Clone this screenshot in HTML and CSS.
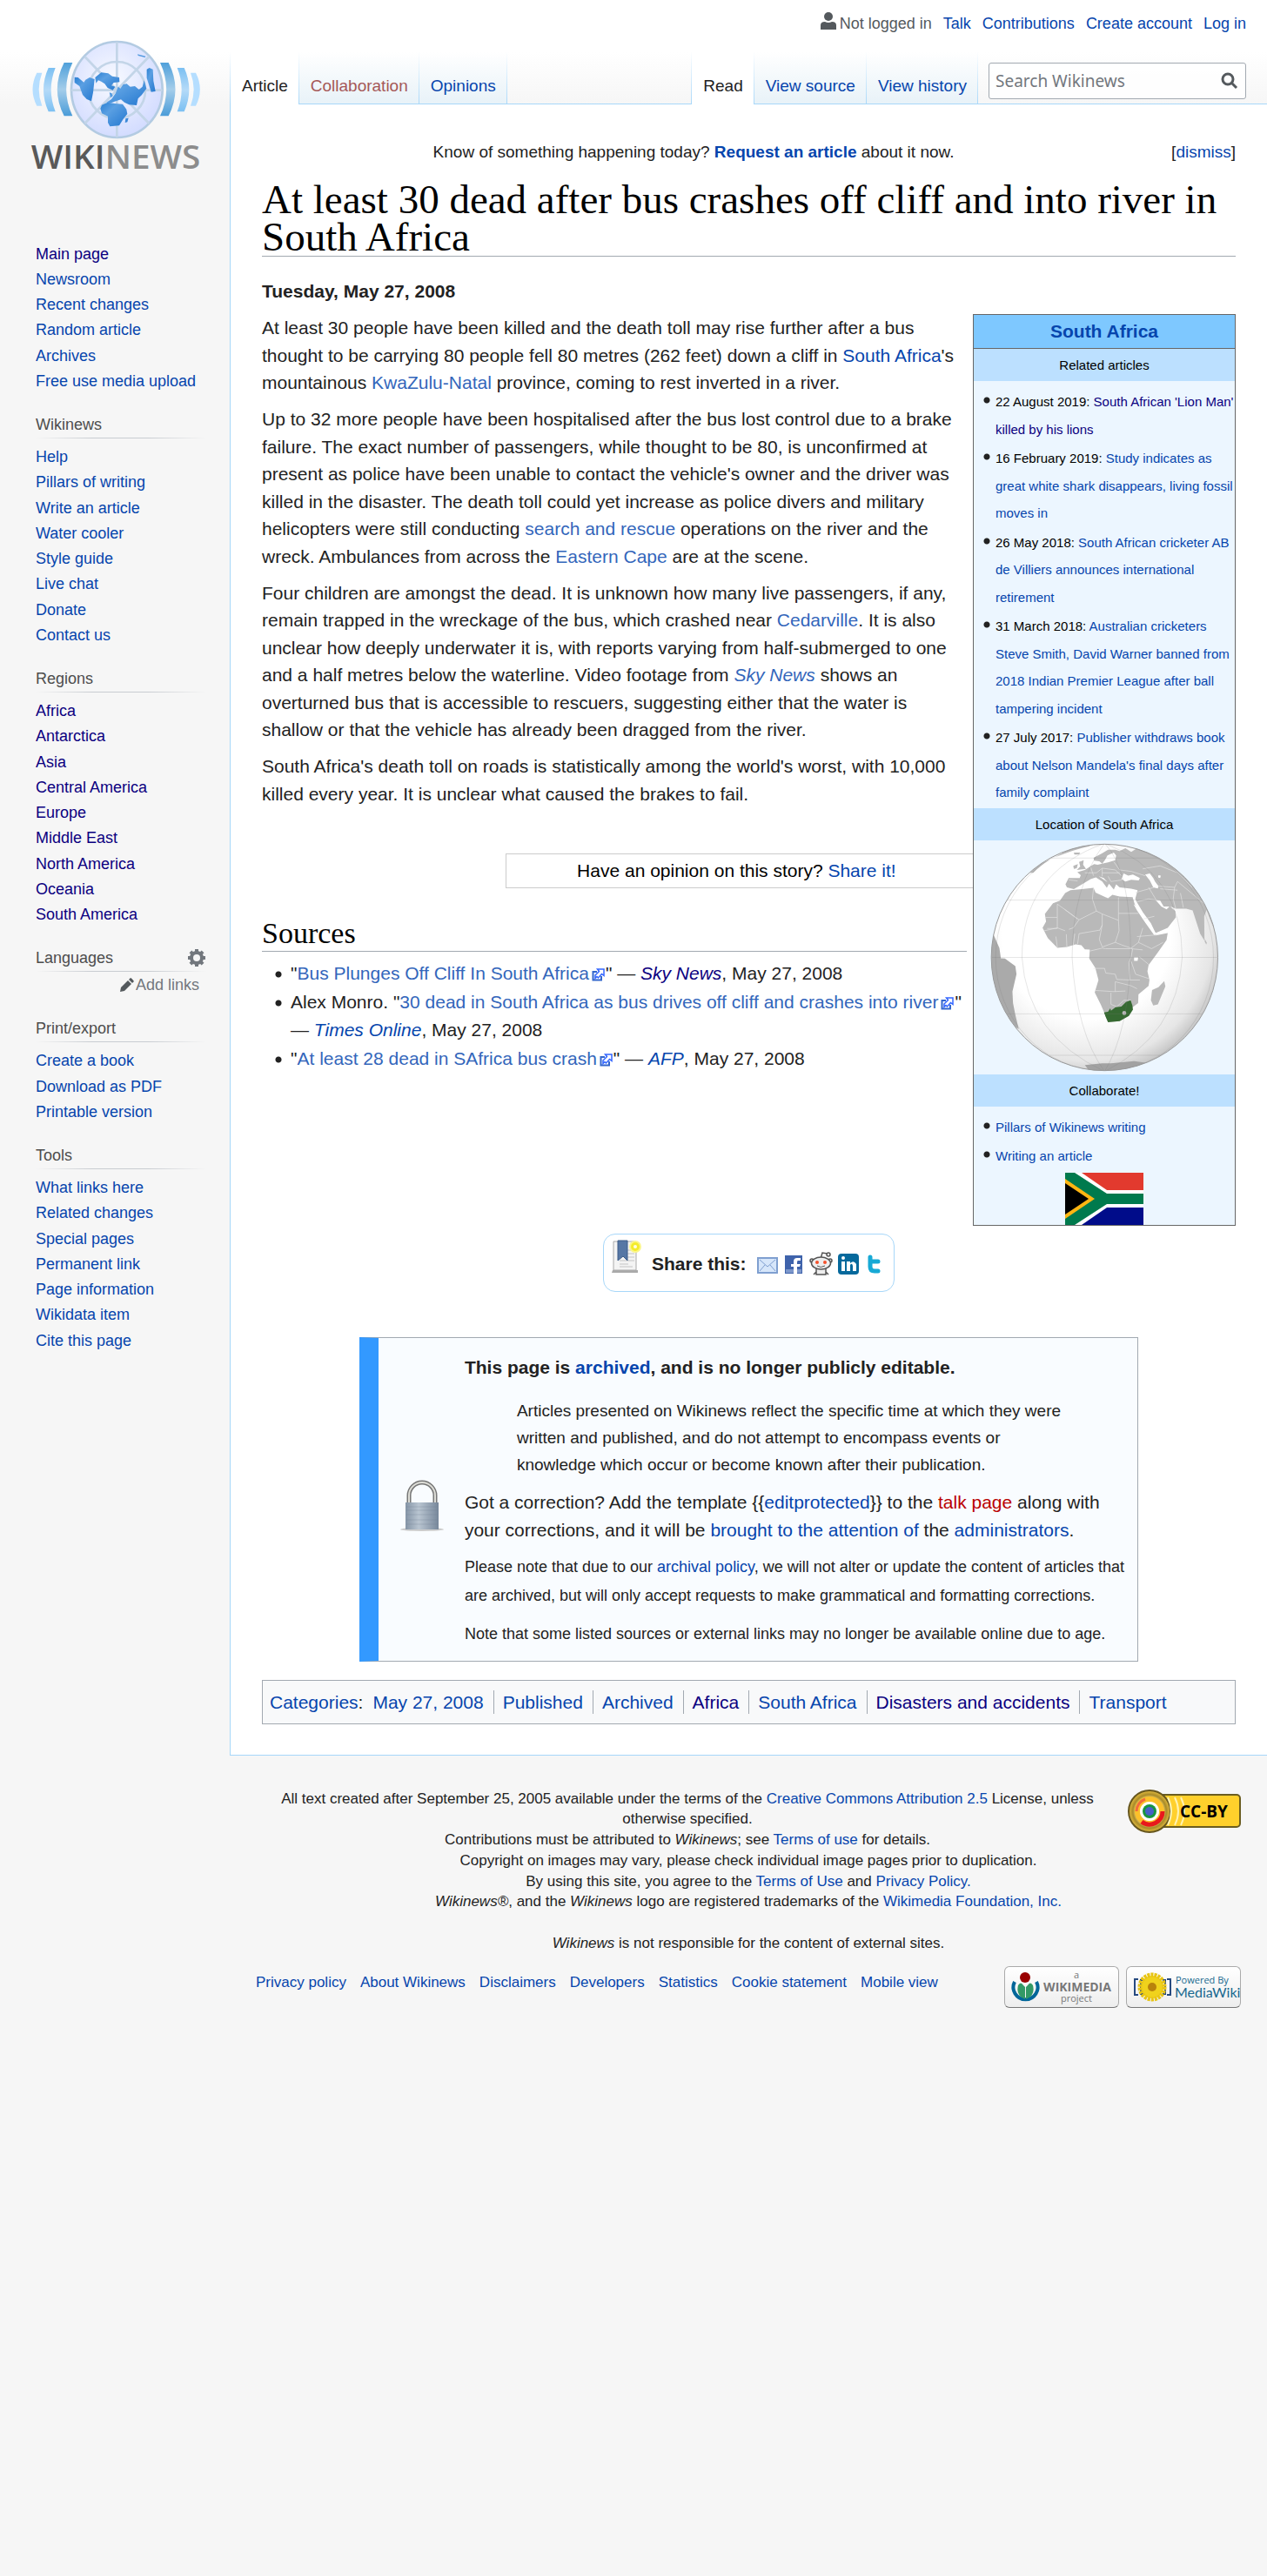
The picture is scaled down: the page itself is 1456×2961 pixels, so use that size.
FILE: index.html
```html
<!DOCTYPE html>
<html lang="en">
<head>
<meta charset="utf-8">
<meta name="viewport" content="width=device-width, initial-scale=1">
<title>At least 30 dead after bus crashes off cliff and into river in South Africa - Wikinews</title>
<link rel="stylesheet" href="styles.css">
</head>
<body>
<svg width="0" height="0" class="defs" aria-hidden="true">
  <symbol id="ext" viewBox="0 0 15 15">
    <path d="M6 4H1.500v9.500H11V9" fill="none" stroke="#36c" stroke-width="2"/>
    <path d="M6.500 1H14v7.500l-2.500-2-4 4.500-1.500-1.500L4 11.500V8l4.500-4.500z" fill="#fff" stroke="#36f" stroke-width="1.500"/>
  </symbol>
</svg>
<div class="page">
  <aside class="sidebar">
    <a class="logo" href="#" aria-label="Wikinews main page">
      <svg viewBox="100 130 600 510" width="200" height="170">
        <defs>
          <radialGradient id="lg" cx=".45" cy=".4" r=".6"><stop offset="0" stop-color="#f8faff"/><stop offset="1" stop-color="#d3dcff"/></radialGradient>
          <linearGradient id="w1" x2="0" y2="1"><stop offset="0" stop-color="#4fa0da"/><stop offset=".5" stop-color="#a4cdea"/><stop offset="1" stop-color="#4a9cd8"/></linearGradient>
          <linearGradient id="w2" x2="0" y2="1"><stop offset="0" stop-color="#7cc0f2"/><stop offset=".5" stop-color="#b4daf8"/><stop offset="1" stop-color="#7cc0f2"/></linearGradient>
          <linearGradient id="ld" x2="1" y2="1"><stop offset="0" stop-color="#2a80d4"/><stop offset=".35" stop-color="#5a9fe2"/><stop offset="1" stop-color="#2478d0"/></linearGradient>
          <g id="waves"><path fill="url(#w1)" d="M251 217H222Q175 309 222 401H251Q208 309 251 217Z"/><path fill="url(#w2)" d="M192 235H168Q134 309 168 386H192Q162 309 192 235Z"/><path fill="#b5deff" d="M146 252H128Q99 309 128 366H146Q124 309 146 252Z"/></g>
        </defs>
        <use href="#waves"/><use href="#waves" transform="translate(804) scale(-1 1)"/>
        <ellipse cx="404" cy="310" rx="157" ry="165" fill="url(#lg)" stroke="#b3cbe2" stroke-width="8"/>
        <circle cx="404" cy="312" r="98" fill="none" stroke="#c3d5e8" stroke-width="8"/>
        <path d="M404 146V474M247 312H561M293 196L515 427M515 196L293 427" stroke="#c3d5e8" stroke-width="8"/>
        <g fill="url(#ld)">
          <path d="M258 267L270 268 290 285 296 276 310 268 327 274 322 320 316 350 300 343 286 328 275 298 258 286Z"/>
          <path d="M329 268L350 251 374 254 388 264 412 268 413 284 393 286 385 296 398 300 390 312 372 304 362 290 350 282 340 278 332 288Z"/>
          <path d="M385 343L400 322 408 300 416 306 426 292 438 290 450 300 466 298 480 310 492 300 498 278 506 306 490 328 477 341 472 364 446 362 430 354 418 344 400 350 384 356 368 354Z"/>
          <path d="M352 363L372 354 398 358 424 360 437 378 440 394 427 410 412 434 380 437 373 424 373 402 352 392 347 376Z"/>
          <path d="M507 240L516 235 528 240 530 280 537 316 522 318 514 292 507 270Z"/>
          <path d="M434 410L444 408 440 422 432 424ZM475 188l28 7-2 4-24-6ZM382 338l-4-18 8 2 4 10Z"/>
        </g>
        <text x="108" y="583" class="word" fill="#595959">WIKI</text><text x="692" y="583" class="word" fill="#8c8c8c" text-anchor="end">NEWS</text>
      </svg>
    </a>
    <nav class="portal"><ul><li><a class="v" href="#">Main page</a></li><li><a href="#">Newsroom</a></li><li><a href="#">Recent changes</a></li><li><a href="#">Random article</a></li><li><a href="#">Archives</a></li><li><a href="#">Free use media upload</a></li></ul></nav>
    <nav class="portal"><h3>Wikinews</h3><ul><li><a href="#">Help</a></li><li><a href="#">Pillars of writing</a></li><li><a href="#">Write an article</a></li><li><a href="#">Water cooler</a></li><li><a href="#">Style guide</a></li><li><a href="#">Live chat</a></li><li><a href="#">Donate</a></li><li><a href="#">Contact us</a></li></ul></nav>
    <nav class="portal"><h3>Regions</h3><ul><li><a class="v" href="#">Africa</a></li><li><a class="v" href="#">Antarctica</a></li><li><a class="v" href="#">Asia</a></li><li><a class="v" href="#">Central America</a></li><li><a class="v" href="#">Europe</a></li><li><a class="v" href="#">Middle East</a></li><li><a class="v" href="#">North America</a></li><li><a class="v" href="#">Oceania</a></li><li><a class="v" href="#">South America</a></li></ul></nav>
    <nav class="portal"><h3>Languages
      <button class="gear" type="button" aria-label="Language settings"><svg viewBox="0 0 22 22" width="22" height="22"><g fill="#72777d"><path d="M9 1h4v20H9zM1 9h20v4H1z"/><path d="M9 1h4v20H9zM1 9h20v4H1z" transform="rotate(45 11 11)"/><circle cx="11" cy="11" r="8"/></g><circle cx="11" cy="11" r="4" fill="#f6f6f6"/></svg></button></h3>
      <a class="add" href="#"><svg viewBox="0 0 16 16" width="16" height="16"><path fill="#54595d" d="M0 16l1-5 8-8 4 4-8 8zM10 2l2-2q1 0 4 4l-2 2z"/></svg>Add links</a></nav>
    <nav class="portal"><h3>Print/export</h3><ul><li><a href="#">Create a book</a></li><li><a href="#">Download as PDF</a></li><li><a href="#">Printable version</a></li></ul></nav>
    <nav class="portal"><h3>Tools</h3><ul><li><a href="#">What links here</a></li><li><a href="#">Related changes</a></li><li><a href="#">Special pages</a></li><li><a href="#">Permanent link</a></li><li><a href="#">Page information</a></li><li><a href="#">Wikidata item</a></li><li><a href="#">Cite this page</a></li></ul></nav>
  </aside>

  <div class="column">
    <header class="head">
      <nav class="personal"><span class="anon"><svg viewBox="0 0 18 20" width="18" height="20"><ellipse cx="9" cy="5" rx="5" ry="5" fill="#54595d"/><path fill="#54595d" d="M0 20v-5q0-4 5-4 4 2 8 0 5 0 5 4v5z"/></svg>Not logged in</span><a href="#">Talk</a><a href="#">Contributions</a><a href="#">Create account</a><a href="#">Log in</a></nav>
      <div class="bar">
        <nav class="tabs"><a class="on" href="#">Article</a><a class="gone" href="#">Collaboration</a><a href="#">Opinions</a></nav>
        <nav class="tabs views"><a class="on" href="#">Read</a><a href="#">View source</a><a href="#">View history</a></nav>
        <form class="search"><input type="search" placeholder="Search Wikinews" aria-label="Search Wikinews"><button type="button" aria-label="Search"><svg viewBox="0 0 20 20" width="20" height="20" fill="none" stroke="#54595d" stroke-width="3"><circle cx="8" cy="8" r="6"/><path d="M12 12l6 6"/></svg></button></form>
      </div>
    </header>

    <main class="content">
      <div class="notice"><span class="msg">Know of something happening today? <a href="#"><b>Request an article</b></a> about it now.</span><span>[<a href="#">dismiss</a>]</span></div>
      <h1>At least 30 dead after bus crashes off cliff and into river in South Africa</h1>
      <p><b>Tuesday, May 27, 2008</b></p>
      <aside class="infobox">
        <h2><a href="#">South Africa</a></h2>
        <h3>Related articles</h3>
        <ul><li>22 August 2019: <a class="v" href="#">South African 'Lion Man' killed by his lions</a></li><li>16 February 2019: <a href="#">Study indicates as great white shark disappears, living fossil moves in</a></li><li>26 May 2018: <a href="#">South African cricketer AB de Villiers announces international retirement</a></li><li>31 March 2018: <a href="#">Australian cricketers Steve Smith, David Warner banned from 2018 Indian Premier League after ball tampering incident</a></li><li>27 July 2017: <a href="#">Publisher withdraws book about Nelson Mandela's final days after family complaint</a></li></ul>
        <h3>Location of South Africa</h3>
        <svg class="map" viewBox="115 147 787 790" width="263" height="263" role="img" aria-label="Globe centred on Africa with South Africa in green">
          <defs><radialGradient id="sea" cx=".42" cy=".4" r=".62"><stop offset=".6" stop-color="#fff"/><stop offset=".9" stop-color="#e6e6e6"/><stop offset="1" stop-color="#c8c8c8"/></radialGradient><clipPath id="gc"><circle cx="508" cy="542" r="391"/></clipPath></defs>
          <circle cx="508" cy="542" r="391" fill="url(#sea)"/>
          <g clip-path="url(#gc)">
            <g fill="#b9b9b9">
              <path d="M390 310L430 306 470 302 477 318 520 338 535 326 560 332 605 334 612 358 640 408 664 440 684 466 726 458 722 482 692 525 660 568 656 590 663 620 660 640 625 670 624 700 605 714 588 745 560 762 520 765 508 735 495 705 474 663 487 620 476 578 455 546 457 515 440 514 428 500 408 497 378 506 345 509 312 475 294 440 306 418 302 392 330 355 354 346 372 320Z"/>
              <path d="M378 300L373 290 384 268 422 268 426 258 414 248 440 240 458 228 472 220 484 222 500 218 520 214 545 206 548 190 540 180 518 190 510 205 500 218 490 210 472 208 470 198 500 182 520 170 545 170 560 175 580 165 600 178 620 165 580 150 900 200 910 480 880 430 860 378 852 400 853 484 838 460 812 380 790 374 754 374 735 366 752 382 754 404 726 440 684 458 668 424 640 386 620 352 614 340 622 310 600 305 560 300 548 290 540 308 525 290 505 268 488 262 524 286 516 302 500 280 478 266 460 272 430 290 402 306Z"/>
              <path d="M420 212L436 206 434 222 444 236 412 240 424 228ZM400 226L416 220 412 234 402 236ZM402 180L424 180 420 187 404 187ZM338 196Q390 160 470 148L455 158Q400 170 338 196ZM250 250Q275 220 320 204 285 225 262 250ZM672 655L694 645 714 624 718 642 692 704 676 708 668 690Z"/>
              <path d="M854 478l7 14-2 6-5-10Z"/>
              <path fill="#aaa" d="M110 560L124 462 145 510 150 545 164 546 200 572 204 600 190 660 192 700 200 740 212 790 150 750Z"/>
              <path fill="#a2a2a2" d="M440 914L500 908 530 908 610 900 665 908 620 940 460 940Z"/>
              <path fill="#a7a7a7" d="M860 370L905 480 905 440 870 350Z"/>
            </g>
            <path fill="#fff" d="M566 272L574 252 590 260 606 256 630 268 626 276 600 274 580 280ZM648 256L664 252 676 268 682 280 694 296 692 304 676 300 664 276ZM684 344L700 346 712 366 732 366 722 376 704 366ZM608 358L632 376 664 424 684 458 680 466 650 424 620 380ZM610 542l14 0-2 12-12 0ZM694 258l8 2-2 8-7-2Z"/>
            <path fill="none" stroke="#e4e4e4" stroke-width="2" d="M302 404H345V358L370 376 420 412 400 440 385 445M370 376L415 410M420 412L480 382 466 340 470 302M480 382L500 392V430L490 450M500 392L556 414V335M556 390H625M500 430L490 480 500 506 545 490M545 490L558 450 556 414M345 404V442H310M300 450L345 440 372 450M345 508L340 470M378 506L376 462M400 500L405 460M415 496L420 460 490 448M457 520L500 510 512 512 600 512 640 516M545 490L570 500 600 510 625 490 640 440M625 490L670 512 710 490M620 470L690 464M470 580L508 580 512 596 545 600 550 618 596 620 592 560 600 540 605 512M475 656L540 660 580 658M545 660V626L600 640 620 650M530 704V664M530 704L550 712 575 690 600 690M660 566L628 540M600 556L615 600 660 615M596 620L630 620M640 410L680 400M615 318L680 300M620 350L660 340 700 346M660 300L690 350M700 305L760 310M540 212L560 240 600 245 648 260M640 236L700 226 760 250 810 300M694 296L750 300 760 280 820 330 856 360M780 370L770 320M440 250L480 250 500 234 545 240M460 230L470 260M500 234V262M545 240L566 260M500 250H560M520 262L530 280 566 275M384 274L415 278M750 300L745 340 754 374"/>
            <path fill="#366a32" d="M506 732L520 730 528 718 530 726 546 714 566 712 582 696 598 690 604 708 606 722 592 744 560 762 520 766 512 748Z"/><circle cx="576" cy="734" r="7" fill="#b9b9b9"/>
            <g fill="none" stroke="#777" stroke-opacity=".28" stroke-width="2"><path d="M318 199H700M172 344H845M117 542H900M172 737H845M318 880H700"/><ellipse cx="508" cy="542" rx="376" ry="392"/><path d="M508 148Q396 300 396 542 410 800 508 936M508 148Q600 240 598 542 590 800 508 936M508 148Q223 250 223 542 240 810 508 936M508 148Q776 250 776 542 760 810 508 936"/></g>
          </g>
          <circle cx="508" cy="542" r="391" fill="none" stroke="#999" stroke-width="3"/>
        </svg>
        <h3>Collaborate!</h3>
        <ul><li><a href="#">Pillars of Wikinews writing</a></li><li><a href="#">Writing an article</a></li></ul>
        <svg class="flag" viewBox="0 0 90 60" width="90" height="60" role="img" aria-label="Flag of South Africa"><path fill="#fff" d="M0 0h90v60H0z"/><path fill="#e23a2e" d="M19 0h71v20H48z"/><path fill="#000c8a" d="M19 60h71V40H48z"/><path fill="#007a4d" d="M0 0h11l37 24h42v12H48L11 60H0z"/><path fill="#ffb612" d="M0 7l34 23L0 53z"/><path d="M0 12l27 18L0 48z"/></svg>
      </aside>
      <p>At least 30 people have been killed and the death toll may rise further after a bus thought to be carrying 80 people fell 80 metres (262 feet) down a cliff in <a href="#">South Africa</a>'s mountainous <a class="x" href="#">KwaZulu-Natal</a> province, coming to rest inverted in a river.</p>
      <p>Up to 32 more people have been hospitalised after the bus lost control due to a brake failure. The exact number of passengers, while thought to be 80, is unconfirmed at present as police have been unable to contact the vehicle's owner and the driver was killed in the disaster. The death toll could yet increase as police divers and military helicopters were still conducting <a class="x" href="#">search and rescue</a> operations on the river and the wreck. Ambulances from across the <a class="x" href="#">Eastern Cape</a> are at the scene.</p>
      <p>Four children are amongst the dead. It is unknown how many live passengers, if any, remain trapped in the wreckage of the bus, which crashed near <a class="x" href="#">Cedarville</a>. It is also unclear how deeply underwater it is, with reports varying from half-submerged to one and a half metres below the waterline. Video footage from <a class="x" href="#"><i>Sky News</i></a> shows an overturned bus that is accessible to rescuers, suggesting either that the water is shallow or that the vehicle has already been dragged from the river.</p>
      <p>South Africa's death toll on roads is statistically among the world's worst, with 10,000 killed every year. It is unclear what caused the brakes to fail.</p>
      <div class="opinion">Have an opinion on this story? <a href="#">Share it!</a></div>
      <h2 class="section">Sources</h2>
      <ul class="sources">
        <li>"<a class="x" href="#">Bus Plunges Off Cliff In South Africa<svg class="ext"><use href="#ext"/></svg></a>" — <a class="v" href="#"><i>Sky News</i></a>, May 27, 2008</li>
        <li>Alex Monro. "<a class="x" href="#">30 dead in South Africa as bus drives off cliff and crashes into river<svg class="ext"><use href="#ext"/></svg></a>" — <a href="#"><i>Times Online</i></a>, May 27, 2008</li>
        <li>"<a class="x" href="#">At least 28 dead in SAfrica bus crash<svg class="ext"><use href="#ext"/></svg></a>" — <a href="#"><i>AFP</i></a>, May 27, 2008</li>
      </ul>
      <div class="share">
        <svg class="mark" viewBox="0 0 34 38" width="34" height="38"><path d="M2 2h26v33H2z" fill="#f4f4f4" stroke="#aaa"/><path d="M1 35h29v3H0z" fill="#aaa"/><path d="M18 12h8M18 16h8M18 20h8M9 24h17M9 28h10M9 31h15" stroke="#c4c4c4"/><path d="M7 1h11v23l-5-5-6 5z" fill="#5677a5" stroke="#3c5c88"/><circle cx="27" cy="8" r="6" fill="#f4ec2a" stroke="#fbf68a" stroke-width="2"/><circle cx="27" cy="8" r="2" fill="#fffde0"/></svg>
        <b>Share this:</b>
        <a href="#" aria-label="Email"><svg viewBox="0 0 24 24" width="24" height="24"><path d="M1 5h22v17H1z" fill="#d6e6fa" stroke="#7f9fd0" stroke-width="2"/><path d="M3 7l9 8 9-8M3 20l6-7M21 20l-6-7" fill="none" stroke="#7f9fd0" stroke-width="1"/></svg></a>
        <a href="#" aria-label="Facebook"><svg viewBox="0 0 24 24" width="24" height="24"><path d="M2 2h20v21H2z" fill="#3f63ab"/><path d="M3 18h18v4H3z" fill="#7c97cb"/><path d="M12 23v-8H9v-3h3V9q0-4 4-4h4v3h-3q-1 0-1 2v2h4l-1 3h-3v8z" fill="#fff"/></svg></a>
        <a href="#" aria-label="Reddit"><svg viewBox="0 0 27 27" width="27" height="27"><g stroke="#555" stroke-width="1.500" fill="#eee"><path d="M13 8l2-7 6 1" fill="none"/><circle cx="22" cy="3" r="2"/><circle cx="3" cy="10" r="2"/><circle cx="24" cy="10" r="2"/><path d="M8 17v9h11v-9M5 26l3-3M22 26l-3-3"/><ellipse cx="13.500" cy="13" rx="11" ry="7"/></g><circle cx="9" cy="12" r="2" fill="#f4512c"/><circle cx="18" cy="12" r="2" fill="#f4512c"/><path d="M9 16q4 3 9 0" stroke="#555" fill="none"/></svg></a>
        <a href="#" aria-label="LinkedIn"><svg viewBox="0 0 24 24" width="24" height="24"><rect width="24" height="24" rx="4" fill="#06699c"/><path d="M4 9h4v11H4zM10 9h4v2q4-4 7 1v8h-4v-6q-1-4-3-1v7h-4z" fill="#fff"/><circle cx="6" cy="5" r="2" fill="#fff"/></svg></a>
        <a href="#" aria-label="Twitter"><svg viewBox="0 0 24 24" width="24" height="24"><path d="M7 4v11q0 5 5 5h4M7 9h9" fill="none" stroke="#17a9d5" stroke-width="5" stroke-linecap="round"/></svg></a>
      </div>
      <section class="archive">
        <svg viewBox="0 0 50 60" width="50" height="60"><defs><linearGradient id="lk"><stop offset="0" stop-color="#8494a6"/><stop offset=".4" stop-color="#b9c5d1"/><stop offset="1" stop-color="#77879a"/></linearGradient></defs><ellipse cx="25" cy="57" rx="25" ry="2" fill="#ccc"/><path d="M10 30V18a15 15 0 0 1 30 0v12" fill="none" stroke="#777" stroke-width="5"/><path d="M10 30V18a15 15 0 0 1 30 0v12" fill="none" stroke="#deded8" stroke-width="2"/><path d="M6 26h38v31H6z" fill="url(#lk)"/><path d="M7 31h36M7 35h36M7 40h36M7 46h36M7 51h36" stroke="#718296" stroke-opacity=".3"/></svg>
        <div>
          <p><b>This page is <a href="#">archived</a>, and is no longer publicly editable.</b></p>
          <blockquote>Articles presented on Wikinews reflect the specific time at which they were written and published, and do not attempt to encompass events or knowledge which occur or become known after their publication.</blockquote>
          <p>Got a correction? Add the template {{<a href="#">editprotected</a>}} to the <a class="new" href="#">talk page</a> along with your corrections, and it will be <a href="#">brought to the attention of</a> the <a href="#">administrators</a>.</p>
          <p class="small">Please note that due to our <a href="#">archival policy</a>, we will not alter or update the content of articles that are archived, but will only accept requests to make grammatical and formatting corrections.</p>
          <p class="small">Note that some listed sources or external links may no longer be available online due to age.</p>
        </div>
      </section>
      <nav class="cats"><span><a href="#">Categories</a>:</span><ul><li><a href="#">May 27, 2008</a></li><li><a href="#">Published</a></li><li><a href="#">Archived</a></li><li><a class="v" href="#">Africa</a></li><li><a href="#">South Africa</a></li><li><a class="v" href="#">Disasters and accidents</a></li><li><a href="#">Transport</a></li></ul></nav>
    </main>

    <footer class="foot">
      <a class="ccby" href="#" aria-label="CC-BY"><svg viewBox="0 0 130 52" width="130" height="52"><defs><radialGradient id="cb"><stop offset=".6" stop-color="#ffe680"/><stop offset=".8" stop-color="#a88a28"/><stop offset="1" stop-color="#e8c040"/></radialGradient></defs><rect x="20" y="7" width="109" height="37" rx="4" fill="#ffd02c" stroke="#6b5d20" stroke-width="2"/><circle cx="25" cy="26" r="24" fill="url(#cb)" stroke="#66561e" stroke-width="2"/><path d="M46 10q8 16 0 32M54 10q8 16 0 32M61 10q8 16 0 32" fill="none" stroke="#fff2b0" stroke-width="2"/><circle cx="25" cy="26" r="14" fill="none" stroke="#fbc02a" stroke-width="6"/><path d="M40 26a15 15 0 0 1-24 12" fill="none" stroke="#e8181c" stroke-width="5"/><path d="M10 26a15 15 0 0 1 10-14" fill="none" stroke="#f06a3c" stroke-width="3"/><circle cx="25" cy="26" r="11" fill="#fff"/><circle cx="25" cy="26" r="8" fill="#18953e"/><circle cx="25" cy="26" r="5" fill="#4660c8"/><text x="60" y="33" class="cc">CC-BY</text></svg></a>
      <p>All text created after September 25, 2005 available under the terms of the <a href="#">Creative Commons Attribution 2.5</a> License, unless otherwise specified.<br>Contributions must be attributed to <i>Wikinews</i>; see <a href="#">Terms of use</a> for details.<br>Copyright on images may vary, please check individual image pages prior to duplication.<br>By using this site, you agree to the <a href="#">Terms of Use</a> and <a href="#">Privacy Policy.</a><br><i>Wikinews®</i>, and the <i>Wikinews</i> logo are registered trademarks of the <a href="#">Wikimedia Foundation, Inc.</a><br><br><i>Wikinews</i> is not responsible for the content of external sites.</p>
      <div class="places">
        <nav><a href="#">Privacy policy</a><a href="#">About Wikinews</a><a href="#">Disclaimers</a><a href="#">Developers</a><a href="#">Statistics</a><a href="#">Cookie statement</a><a href="#">Mobile view</a></nav>
        <a class="badge" href="#" aria-label="A Wikimedia project"><svg viewBox="0 0 130 46" width="130" height="46"><path d="M11 17a14 14 0 1 0 25 0" fill="none" stroke="#069" stroke-width="4"/><path d="M15 21q3-5 6 0l2 2V37Q12 33 15 21zM32 21q-3-5-6 0l-2 2V37Q35 33 32 21z" fill="#396"/><circle cx="23" cy="12" r="6" fill="#900"/><g text-anchor="middle" fill="#777"><text x="82" y="13" class="b1">a</text><text x="83" y="28" class="b2">WIKIMEDIA</text><text x="82" y="40" class="b1">project</text></g></svg></a>
        <a class="badge" href="#" aria-label="Powered by MediaWiki"><svg viewBox="0 0 130 46" width="130" height="46"><path d="M13 14H9v18h4M46 14h4v18h-4M19 15h-3v16h3M41 15h3v16h-3" fill="none" stroke="#274a80" stroke-width="2"/><circle cx="29" cy="23" r="13" fill="#f0d21c"/><circle cx="29" cy="23" r="14" fill="none" stroke="#e8c413" stroke-width="5" stroke-dasharray="3 1"/><circle cx="29" cy="23" r="5" fill="#b8820c"/><g fill="#17688f"><text x="56" y="19" class="b1">Powered By</text><text x="55" y="35" class="b4">MediaWiki</text></g></svg></a>
      </div>
    </footer>
  </div>
</div>
</body>
</html>
```
FILE: styles.css
```css
* { box-sizing: border-box; }
body {
  margin: 0;
  min-height: 100vh;
  background: #f6f6f6 linear-gradient(#fff 50%, #f6f6f6) 0 0 / 100% 120px no-repeat;
  color: #222;
  font: 21px/1.5 "Liberation Sans", Arial, sans-serif;
}
a { color: #0645ad; text-decoration: none; }
a:hover { text-decoration: underline; }
a.v { color: #0b0080; }
a.x { color: #36b; }
a.new { color: #ba0000; }
ul { list-style: none; margin: 0; padding: 0; }
h1, h2, h3, p { margin: 0; font-weight: normal; }
svg { display: block; flex: none; }
button { border: 0; padding: 0; background: none; }
.defs { position: absolute; }
.page { display: grid; grid-template-columns: 264px minmax(0, 1fr); }

/* Sidebar */
.sidebar { display: flex; flex-direction: column; gap: 20px; font-size: 18px; line-height: 20px; }
.logo { height: 250px; padding: 43px 0 0 33px; }
.word { font: 600 116px "Open Sans", sans-serif; }
.portal { padding-left: 41px; }
.portal h3 {
  display: flex; align-items: center; justify-content: space-between;
  height: 31px; width: 196px;
  font-size: 18px; color: #4d4d4d;
  background: linear-gradient(90deg, transparent, #c8ccd1 33%, #c8ccd1 66%, transparent) bottom / 100% 1px no-repeat;
}
.portal ul { padding-top: 7px; }
.portal li { padding: .25em 0; line-height: 1.125; }
.add { display: flex; justify-content: flex-end; align-items: center; gap: 2px; width: 188px; height: 30px; color: #72777d; }

/* Header */
.personal { display: flex; justify-content: flex-end; gap: 13px; height: 60px; padding: 14px 24px 0 0; font-size: 18px; line-height: 27px; }
.anon { display: flex; gap: 4px; color: #54595d; }
.bar { display: flex; height: 60px; background: linear-gradient(#a7d7f9, #a7d7f9) bottom / 100% 1px no-repeat; }
.tabs { display: flex; font-size: 19px; line-height: 27px; }
.tabs a {
  padding: 25px 12px 0 13px;
  border-right: 1px solid;
  border-image: linear-gradient(#fff, #a7d7f9) 1;
  background: linear-gradient(#fff, #e8f2f8) 0 0 / 100% 59px no-repeat;
}
.tabs a:first-child { border-left: 1px solid; }
.tabs a.on { color: #222; background: #fff; }
.tabs a.gone { color: #a55858; }
.views { margin-left: auto; }
.search { display: flex; align-items: center; width: 296px; height: 42px; margin: 12px 24px 0 12px; padding-right: 8px; border: 1px solid #a2a9b1; border-radius: 3px; background: #fffc; }
.search input { flex: 1; min-width: 0; border: 0; padding: 0 7px; background: none; font: 19px "Noto Sans", sans-serif; }
.search input::placeholder { color: #72777d; opacity: 1; }

/* Article */
.content { margin-top: -1px; padding: 32px 36px 35px; border: solid #a7d7f9; border-width: 0 0 1px 1px; background: linear-gradient(#fff, #fff) 0 1px no-repeat; }
.notice { display: flex; font-size: 19px; line-height: 48px; }
.notice .msg { flex: 1; text-align: center; padding-right: 53px; }
h1, .section { font-family: "Liberation Serif", serif; color: #000; border-bottom: 1px solid #a2a9b1; }
h1 { margin: 9px 0 24px; font-size: 47px; line-height: 43px; }
.content p { margin-bottom: .5em; }
.infobox { float: right; width: 302px; margin: 0 0 9px 7px; border: 1px solid #666; background: #ecf6ff; color: #000; font-size: 15px; line-height: 2.1; }
.infobox h2 { height: 39px; font-size: 21px; font-weight: bold; line-height: 38px; text-align: center; background: #7ec8ff; border-bottom: 1px solid #666; }
.infobox h3 { font-size: 15px; line-height: 37px; text-align: center; background: #bce0ff; }
.infobox ul { padding: 8px 0 0 8px; }
.infobox li { margin-bottom: 2px; padding-left: 17px; background: radial-gradient(circle at 7px 14px, #222 3px, transparent 4px); }
.map { margin: 3px auto; }
.flag { margin: 3px auto 0; }
.opinion { width: 50%; margin: 53px auto 0; padding: 3px 0; border: 1px solid #ccc; text-align: center; color: #000; }
.section { overflow: hidden; margin: 32px 0 9px; font-size: 34px; line-height: 40px; }
.sources li { margin-bottom: 2px; padding-left: 33px; background: radial-gradient(circle at 19px 17px, #222 3px, transparent 4px); }
.ext { display: inline-block; width: 15px; height: 15px; margin: 0 1px 0 3px; vertical-align: -2px; }
.share { clear: both; display: flex; align-items: center; gap: 6px; width: 335px; height: 67px; margin: 0 auto 52px; padding: 3px 0 0 9px; border: 1px solid #a7d7f9; border-radius: 14px; }
.share .mark { align-self: flex-start; margin: 3px 6px 0 0; }
.share b { margin-right: 6px; white-space: nowrap; }
.archive { display: flex; align-items: center; gap: 24px; width: 80%; margin: 0 auto 21px; padding: 18px 14px 3px 25px; border: 1px solid #a2a9b1; border-left: 22px solid #39f; background: #f9fcff; }
.archive blockquote { margin: 19px 60px 12px; font-size: 19px; line-height: 31px; }
.archive .small { margin-bottom: 11px; font-size: 18px; line-height: 33px; }
.cats { display: flex; flex-wrap: wrap; padding: 11px 8px; border: 1px solid #a2a9b1; background: #f8f9fa; line-height: 27px; }
.cats ul { display: flex; flex-wrap: wrap; }
.cats li { padding: 0 11px 0 10px; border-left: 1px solid #a2a9b1; }
.cats li:first-child { border: 0; padding-left: 11px; }

/* Footer */
.foot { padding: 38px 30px; font-size: 17px; line-height: 1.4; }
.foot p { text-align: center; }
.ccby { float: right; height: 60px; margin-left: 10px; }
.places { display: flex; align-items: flex-start; gap: 8px; margin-top: 14px; }
.places nav { flex: 1; display: flex; gap: 16px; padding-top: 7px; }
.badge { border: 1px solid #aaa; border-bottom-color: #777; border-radius: 6px; background: linear-gradient(#fff, #eee); }
.cc { font: bold 19px "Open Sans", sans-serif; }
.b1 { font: 11px "Open Sans", sans-serif; }
.b2 { font: bold 14px "Open Sans", sans-serif; }
.b4 { font: 16px Lato, sans-serif; }
```
